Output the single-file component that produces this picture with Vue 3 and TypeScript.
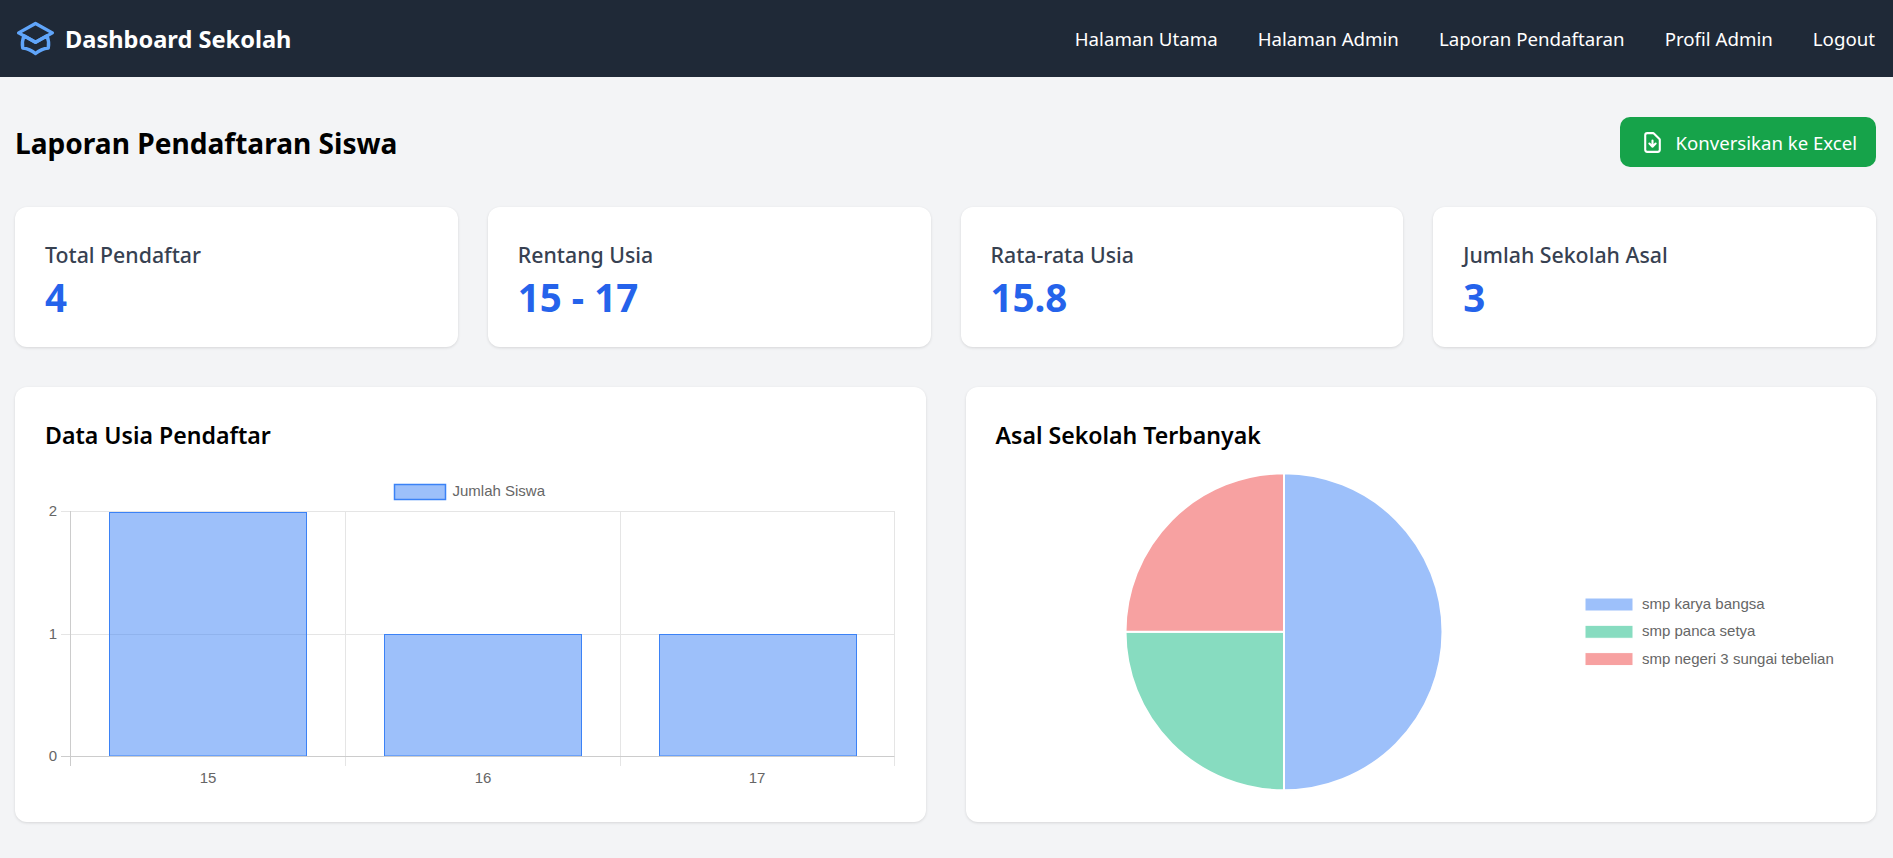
<template>
  <div class="page">
    <nav class="navbar">
      <div class="brand">
        <svg class="brand-icon" viewBox="0 0 24 24" fill="none" stroke="#60a5fa" stroke-width="1.8" stroke-linecap="round" stroke-linejoin="round">
          <path d="M12 14l9-5-9-5-9 5 9 5z" />
          <path d="M12 14l6.16-3.422a12.083 12.083 0 01.665 6.479A11.952 11.952 0 0012 20.055a11.952 11.952 0 00-6.824-2.998 12.083 12.083 0 01.665-6.479L12 14z" />
        </svg>
        <span>Dashboard Sekolah</span>
      </div>
      <ul class="nav-links">
        <li v-for="link in links" :key="link">{{ link }}</li>
      </ul>
    </nav>

    <main class="content">
      <header class="page-head">
        <h1>Laporan Pendaftaran Siswa</h1>
        <button class="excel-btn">
          <svg width="25" height="25" viewBox="0 0 24 24" fill="none" stroke="#fff" stroke-width="2" stroke-linecap="round" stroke-linejoin="round">
            <path d="M12 10v6m0 0l-3-3m3 3l3-3m2 8H7a2 2 0 01-2-2V5a2 2 0 012-2h5.586a1 1 0 01.707.293l5.414 5.414a1 1 0 01.293.707V19a2 2 0 01-2 2z" />
          </svg>
          Konversikan ke Excel
        </button>
      </header>

      <section class="stats">
        <div v-for="stat in stats" :key="stat.label" class="stat-card">
          <p class="stat-label">{{ stat.label }}</p>
          <p class="stat-value">{{ stat.value }}</p>
        </div>
      </section>

      <section class="charts">
        <div class="chart-card">
          <h2>Data Usia Pendaftar</h2>
          <svg class="chart" viewBox="0 0 850 330">
            <rect x="349.5" y="13.5" width="51" height="15" fill="#9dc0fa" stroke="#3b82f6" stroke-width="1.5" />
            <text x="407.5" y="25" class="chart-text">Jumlah Siswa</text>
            <line v-for="y in gridY" :key="y" x1="16" x2="849.5" :y1="y" :y2="y" stroke="#e5e5e5" />
            <line v-for="x in gridX" :key="x" :x1="x" :x2="x" y1="40" y2="295" stroke="#e5e5e5" />
            <rect v-for="bar in bars" :key="bar.x" :x="bar.x" :y="bar.y" width="197" :height="285 - bar.y" fill="rgba(59,130,246,0.5)" stroke="#3b82f6" stroke-width="1" />
            <line x1="25.5" x2="25.5" y1="40" y2="295" stroke="#ccc" />
            <line x1="16" x2="849.5" y1="285.5" y2="285.5" stroke="#ccc" />
            <text v-for="tick in ticksY" :key="tick.label" x="12" :y="tick.y" class="chart-text" text-anchor="end">{{ tick.label }}</text>
            <text v-for="tick in ticksX" :key="tick.label" :x="tick.x" y="312" class="chart-text" text-anchor="middle">{{ tick.label }}</text>
          </svg>
        </div>

        <div class="chart-card">
          <h2>Asal Sekolah Terbanyak</h2>
          <svg class="chart" viewBox="0 0 850 330">
            <path v-for="slice in slices" :key="slice.label" :d="slice.d" :fill="slice.color" stroke="#fff" stroke-width="2" />
            <g v-for="(slice, i) in slices" :key="slice.label + '-legend'">
              <rect x="589" :y="127 + i * 27.3" width="48" height="13" :fill="slice.color" stroke="#fff" />
              <text x="646" :y="138 + i * 27.3" class="chart-text">{{ slice.label }}</text>
            </g>
          </svg>
        </div>
      </section>
    </main>
  </div>
</template>

<script setup lang="ts">
const links = ['Halaman Utama', 'Halaman Admin', 'Laporan Pendaftaran', 'Profil Admin', 'Logout']

const stats = [
  { label: 'Total Pendaftar', value: '4' },
  { label: 'Rentang Usia', value: '15 - 17' },
  { label: 'Rata-rata Usia', value: '15.8' },
  { label: 'Jumlah Sekolah Asal', value: '3' }
]

const gridY = [40.5, 163.5, 285.5]
const gridX = [300.5, 575.5, 849.5]
const bars = [
  { x: 64.5, y: 41.5 },
  { x: 339.5, y: 163.5 },
  { x: 614.5, y: 163.5 }
]
const ticksY = [
  { label: '2', y: 45 },
  { label: '1', y: 167.5 },
  { label: '0', y: 290 }
]
const ticksX = [
  { label: '15', x: 163 },
  { label: '16', x: 438 },
  { label: '17', x: 712 }
]

const cx = 288
const cy = 160.8
const r = 158.5

function arc(from: number, to: number): string {
  const point = (a: number) => {
    const rad = ((a - 90) * Math.PI) / 180
    return `${cx + r * Math.cos(rad)} ${cy + r * Math.sin(rad)}`
  }
  return `M${cx} ${cy}L${point(from)}A${r} ${r} 0 ${to - from > 180 ? 1 : 0} 1 ${point(to)}Z`
}

const slices = [
  { label: 'smp karya bangsa', color: '#9dc0fa', d: arc(0, 180) },
  { label: 'smp panca setya', color: '#87dcc0', d: arc(180, 270) },
  { label: 'smp negeri 3 sungai tebelian', color: '#f7a1a1', d: arc(270, 360) }
]
</script>

<style>
body {
  background: #f3f4f6;
}
</style>

<style scoped>
.page {
  min-height: 858px;
  background: #f3f4f6;
  font-family: "Noto Sans", "Open Sans", sans-serif;
  color: #000;
}

.navbar {
  height: 77px;
  box-sizing: border-box;
  padding: 0 18px 0 13px;
  background: #1f2937;
  color: #fff;
  display: flex;
  align-items: center;
  justify-content: space-between;
}

.brand {
  display: flex;
  align-items: center;
  gap: 7px;
  font-size: 23.6px;
  font-weight: 700;
}

.brand-icon {
  width: 45px;
  height: 45px;
}

.nav-links {
  list-style: none;
  margin: 0;
  padding: 0;
  display: flex;
  gap: 40px;
  font-size: 18.7px;
}

.content {
  padding: 40px 17px 0 15px;
}

.page-head {
  display: flex;
  align-items: center;
  justify-content: space-between;
  height: 50px;
  margin-bottom: 40px;
}

h1 {
  margin: 0;
  padding-top: 2px;
  font-size: 28.1px;
  font-weight: 700;
}

.excel-btn {
  height: 50px;
  padding: 0 19px 0 20px;
  display: flex;
  align-items: center;
  gap: 10px;
  border: 0;
  border-radius: 10px;
  background: #16a34a;
  color: #fff;
  font: inherit;
  font-size: 18.6px;
}

.stats {
  display: grid;
  grid-template-columns: repeat(4, 1fr);
  gap: 30px;
  margin-bottom: 40px;
}

.stat-card {
  height: 140px;
  box-sizing: border-box;
  padding: 30px;
  background: #fff;
  border-radius: 12px;
  box-shadow: 0 1px 3px rgba(0, 0, 0, 0.12);
}

.stat-label {
  margin: 0;
  font-size: 21.3px;
  font-weight: 500;
  line-height: 35px;
  color: #374151;
}

.stat-value {
  margin: 3px 0 0;
  font-size: 38.5px;
  font-weight: 700;
  line-height: 44px;
  color: #2563eb;
}

.charts {
  display: grid;
  grid-template-columns: repeat(2, 1fr);
  gap: 40px;
}

.chart-card {
  height: 435px;
  box-sizing: border-box;
  padding: 30px;
  background: #fff;
  border-radius: 12px;
  box-shadow: 0 1px 3px rgba(0, 0, 0, 0.12);
}

h2 {
  margin: 0 0 18px;
  font-size: 23.1px;
  font-weight: 600;
  line-height: 36px;
}

.chart {
  display: block;
  width: 850px;
  height: 330px;
  overflow: visible;
}

.chart-text {
  font-family: "Liberation Sans", sans-serif;
  font-size: 15px;
  fill: #666;
}
</style>
